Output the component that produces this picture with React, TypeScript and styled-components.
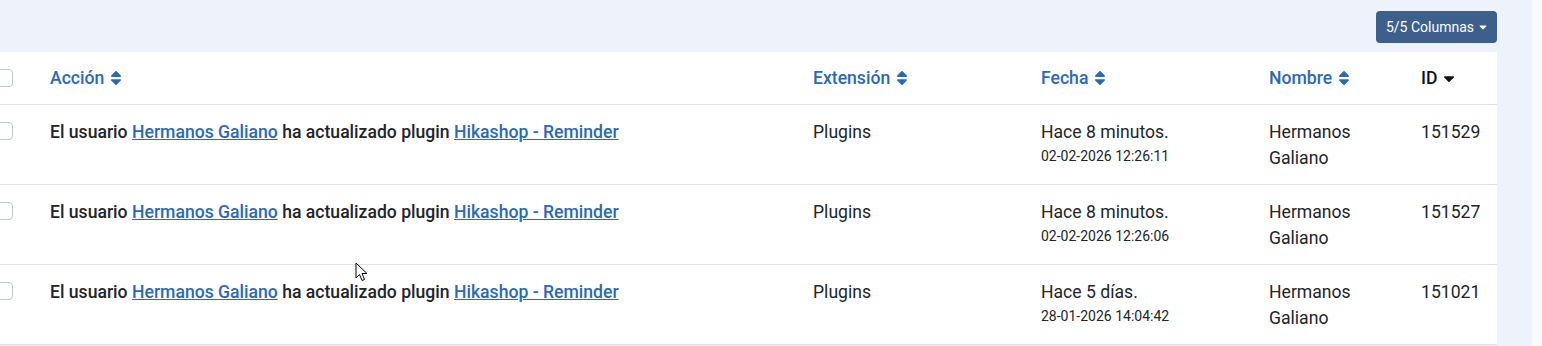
import React from "react";
import styled, { createGlobalStyle } from "styled-components";
import { FaSort, FaSortDown, FaCaretDown } from "react-icons/fa";

const GlobalStyle = createGlobalStyle`
  html, body {
    margin: 0;
    padding: 0;
    background: #eef3fb;
    font-family: Roboto, "Liberation Sans", Arial, sans-serif;
    overflow: hidden;
  }
`;

const Page = styled.div`
  display: flex;
  margin-left: -40px;
  height: 346px;
  position: relative;
`;

const Main = styled.div`
  flex: 1;
  padding: 11px 35px 0 0;
`;

const Strip = styled.div`
  width: 10px;
  background: #f8fafd;
`;

const Toolbar = styled.div`
  display: flex;
  justify-content: flex-end;
  margin-bottom: 9px;
`;

const ColumnsButton = styled.button`
  display: flex;
  align-items: center;
  gap: 3px;
  height: 32px;
  padding: 0 8px 0 10px;
  border: none;
  border-radius: 4px;
  background: #3d5f8b;
  color: #fff;
  font-family: inherit;
  font-size: 14px;
  cursor: pointer;
`;

const Table = styled.table`
  width: 100%;
  table-layout: fixed;
  border-collapse: collapse;
  background: #fff;
  color: #212529;
`;

const Th = styled.th<{ $active?: boolean }>`
  text-align: left;
  font-size: 17.6px;
  line-height: 26px;
  font-weight: 500;
  padding: 13px 12px;
  border-bottom: 1px solid #dee2e6;
  color: ${({ $active }) => ($active ? "#111" : "#2a69b8")};
  white-space: nowrap;
`;

const HeadLabel = styled.span`
  display: inline-flex;
  align-items: center;
  gap: 3px;
`;

const Td = styled.td<{ $strong?: boolean }>`
  vertical-align: top;
  font-size: 17.6px;
  line-height: 26px;
  padding: 14px 12px 13px;
  border-bottom: 1px solid #dee2e6;
  font-weight: ${({ $strong }) => ($strong ? 500 : 400)};
`;

const CheckCell = styled.td`
  vertical-align: top;
  padding: 17px 0 0 35px;
  border-bottom: 1px solid #dee2e6;
`;

const CheckHead = styled.th`
  padding: 17px 0 0 35px;
  vertical-align: top;
  border-bottom: 1px solid #dee2e6;
  text-align: left;
`;

const Check = styled.span`
  display: block;
  width: 16px;
  height: 16px;
  border: 1px solid #b9c7d9;
  border-radius: 4px;
  background: #fff;
`;

const A = styled.a`
  color: #2a69b8;
  text-decoration: underline;
`;

const DateSmall = styled.div`
  font-size: 14px;
  line-height: 20px;
  margin-top: 1px;
`;

const Cursor = styled.svg`
  position: absolute;
  left: 395px;
  top: 262px;
`;

const rows = [
  { rel: "Hace 8 minutos.", date: "02-02-2026 12:26:11", id: "151529" },
  { rel: "Hace 8 minutos.", date: "02-02-2026 12:26:06", id: "151527" },
  { rel: "Hace 5 días.", date: "28-01-2026 14:04:42", id: "151021" },
];

const SortHead = ({ label }: { label: string }) => (
  <Th>
    <HeadLabel>
      {label}
      <FaSort size={18} />
    </HeadLabel>
  </Th>
);

const App = () => (
  <>
    <GlobalStyle />
    <Page>
      <Main>
        <Toolbar>
          <ColumnsButton>
            5/5 Columnas
            <FaCaretDown size={12} />
          </ColumnsButton>
        </Toolbar>
        <Table>
          <colgroup>
            <col style={{ width: 78 }} />
            <col style={{ width: 763 }} />
            <col style={{ width: 228 }} />
            <col style={{ width: 228 }} />
            <col style={{ width: 152 }} />
            <col />
          </colgroup>
          <thead>
            <tr>
              <CheckHead>
                <Check />
              </CheckHead>
              <SortHead label="Acción" />
              <SortHead label="Extensión" />
              <SortHead label="Fecha" />
              <SortHead label="Nombre" />
              <Th $active>
                <HeadLabel>
                  ID
                  <FaSortDown size={18} style={{ marginTop: -7 }} />
                </HeadLabel>
              </Th>
            </tr>
          </thead>
          <tbody>
            {rows.map((r) => (
              <tr key={r.id}>
                <CheckCell>
                  <Check />
                </CheckCell>
                <Td $strong>
                  El usuario <A href="#">Hermanos Galiano</A> ha actualizado
                  plugin <A href="#">Hikashop - Reminder</A>
                </Td>
                <Td>Plugins</Td>
                <Td>
                  {r.rel}
                  <DateSmall>{r.date}</DateSmall>
                </Td>
                <Td>Hermanos Galiano</Td>
                <Td>{r.id}</Td>
              </tr>
            ))}
          </tbody>
        </Table>
      </Main>
      <Strip />
      <Cursor width="14" height="20" viewBox="0 0 14 20">
        <path
          d="M1 1 L1 16 L4.5 12.5 L7 18.5 L9.5 17.5 L7 11.5 L12 11.5 Z"
          fill="#fff"
          stroke="#000"
          strokeWidth="1"
        />
      </Cursor>
    </Page>
  </>
);

export default App;
